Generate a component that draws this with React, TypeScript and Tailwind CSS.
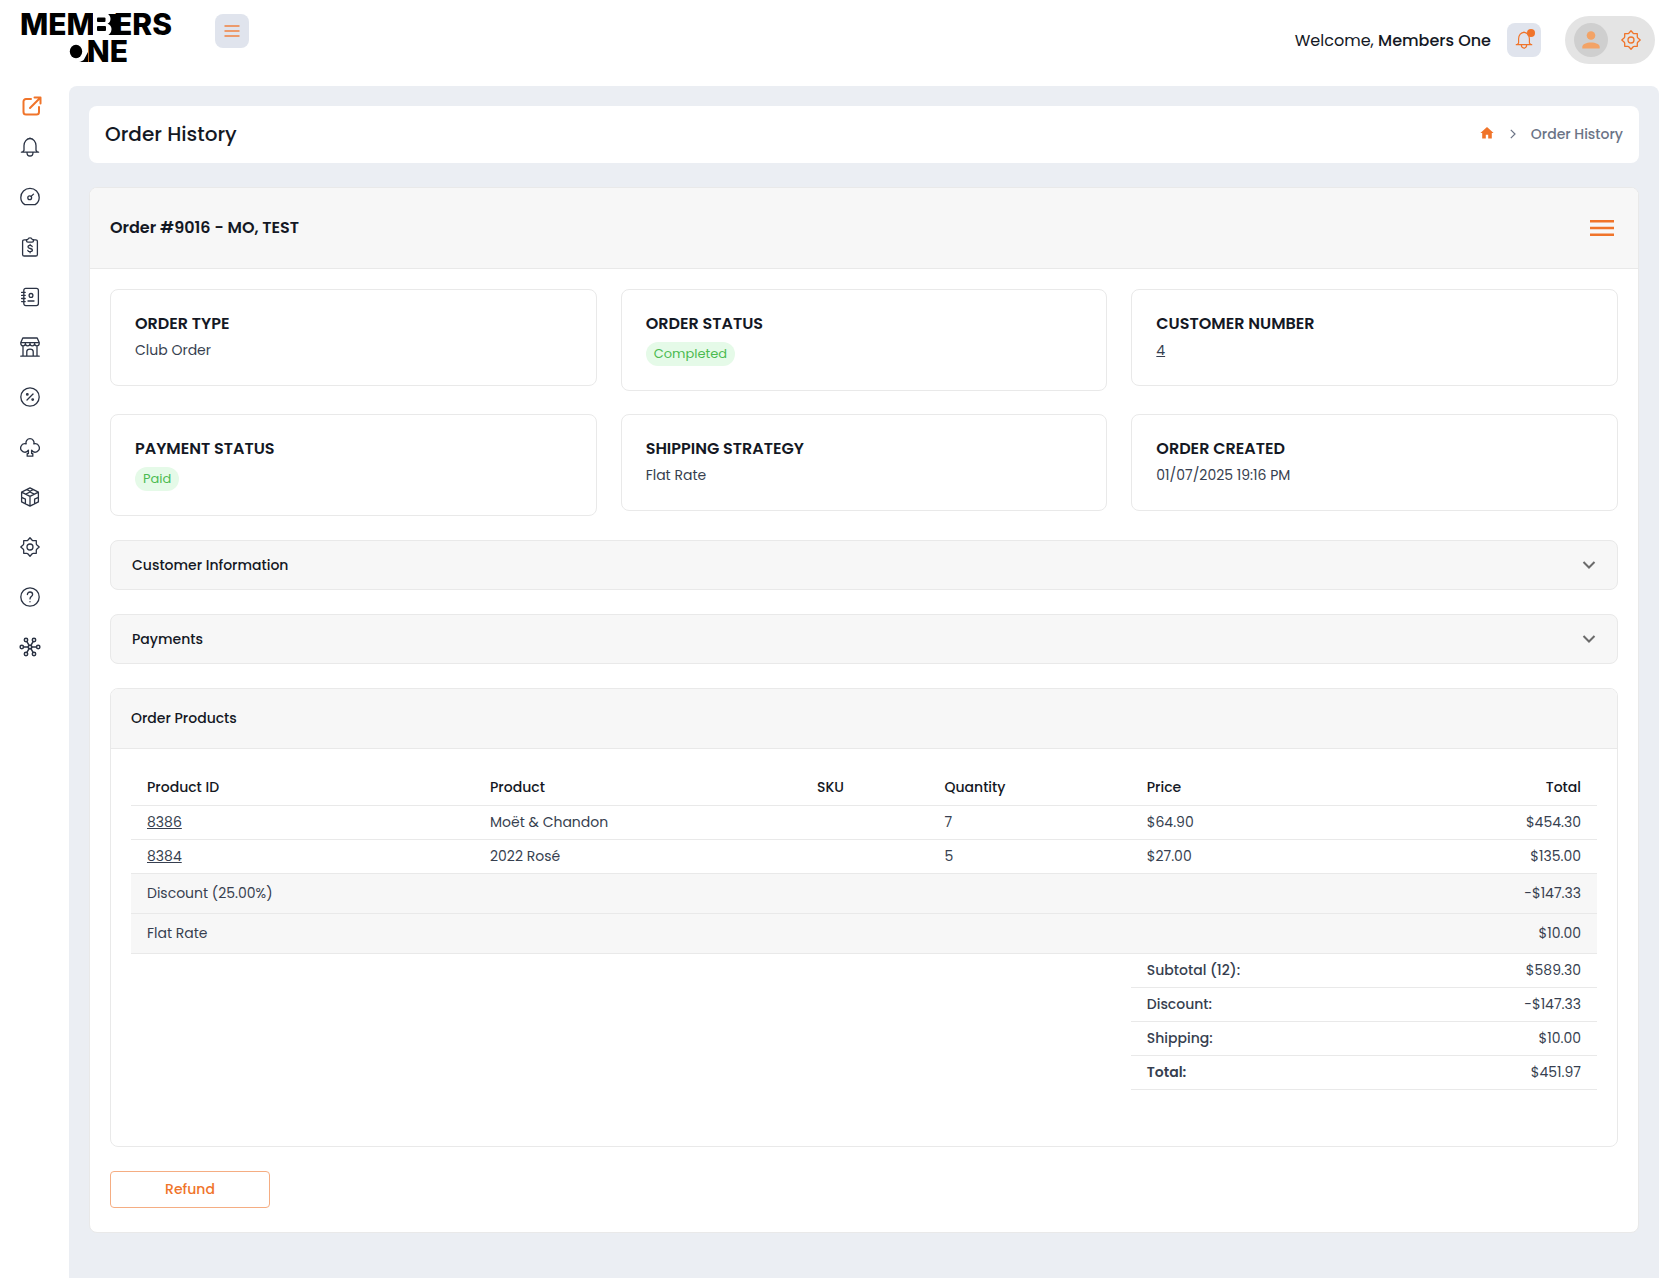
import React from "react";

const iconProps = {
  width: 20,
  height: 20,
  viewBox: "0 0 20 20",
  fill: "none",
  stroke: "currentColor",
  strokeWidth: 1.3,
  strokeLinecap: "round" as const,
  strokeLinejoin: "round" as const,
};

const BellIcon = () => (
  <svg {...iconProps}>
    <path d="M10 .8v.6M4 13.400V8.600C4 4.700 6.800 1.500 10 1.500s6 3.200 6 7.100v4.800l1.600 1.800H2.400zM1.400 15.200h17.200M7 15.400c0 2.200 1.200 3.600 3 3.600s3-1.400 3-3.600" />
  </svg>
);

const GearIcon = () => (
  <svg {...iconProps}>
    <path d="M10 .8l2.200 2.500c.3.300.6.400 1 .4h3.100v3.100c0 .4.100.7.400 1L19.200 10l-2.500 2.200c-.3.300-.4.600-.4 1v3.100h-3.100c-.4 0-.7.100-1 .4L10 19.200l-2.200-2.500c-.3-.3-.6-.4-1-.4H3.700v-3.100c0-.4-.1-.7-.4-1L.8 10l2.500-2.200c.3-.3.4-.6.4-1V3.700h3.100c.4 0 .7-.1 1-.4z" />
    <circle cx="10" cy="10" r="3" />
  </svg>
);

const GaugeIcon = () => (
  <svg {...iconProps}>
    <path d="M4.800 17.600C2.400 16 .8 13.600.8 10.400.8 5.400 4.900 1.300 10 1.300s9.200 4.100 9.200 9.100c0 3.200-1.600 5.600-4 7.200z" />
    <circle cx="9.700" cy="10.800" r="1.900" />
    <path d="M11.100 9.400l2.400-2.300" />
  </svg>
);

const OrdersIcon = () => (
  <svg {...iconProps}>
    <path d="M6.500 2.800H4.200c-.9 0-1.600.7-1.600 1.600v13c0 .9.7 1.600 1.600 1.600h11.600c.9 0 1.600-.7 1.600-1.600v-13c0-.9-.7-1.600-1.600-1.600h-2.300" />
    <path d="M6.500 2.600h1.200a2.400 2.400 0 0 1 4.600 0h1.200v1.200c0 .8-.6 1.400-1.400 1.400H7.900c-.8 0-1.400-.6-1.400-1.400z" />
    <path d="M12.200 9.600c-.2-.8-1-1.200-2.100-1.200-1.200 0-2.100.5-2.100 1.500 0 2.200 4.400 1 4.400 3.200 0 1-1 1.600-2.300 1.600-1.200 0-2.100-.5-2.300-1.400M10.100 7.400v1M10.100 14.700v1.100" />
  </svg>
);

const ContactsIcon = () => (
  <svg {...iconProps}>
    <rect x="3.800" y="1.400" width="14.600" height="17.200" rx="2" />
    <circle cx="11" cy="8.400" r="1.900" />
    <path d="M8 14h6M1.600 5.400h3.600M1.600 8.400h3.600M1.600 11.500h3.600M1.600 14.600h3.600" />
  </svg>
);

const StoreIcon = () => (
  <svg {...iconProps}>
    <path d="M2.800 1h14.400l2 4.600v1a2.300 2.300 0 0 1-4.600 0 2.300 2.300 0 0 1-4.600 0 2.300 2.300 0 0 1-4.600 0 2.300 2.300 0 0 1-4.600 0v-1zM1 5.600h18M3 9v10M17 9v10M.8 19.200h18.400M6.800 19v-4.600c0-1.400 1.400-2.300 3.200-2.300s3.200.9 3.200 2.300V19" />
  </svg>
);

const PercentIcon = () => (
  <svg {...iconProps}>
    <circle cx="10" cy="10" r="9.200" />
    <path d="M7 13l6-6" />
    <circle cx="7.300" cy="7.400" r=".8" />
    <circle cx="12.700" cy="12.600" r=".8" />
  </svg>
);

const ClubIcon = () => (
  <svg {...iconProps}>
    <path d="M8.400 13.200a4.200 4.200 0 1 1-2.200-6.300 4 4 0 1 1 7.600 0 4.200 4.200 0 1 1-2.200 6.300v3.400h1.200v2.600H7.200v-2.600h1.200z" />
  </svg>
);

const BoxIcon = () => (
  <svg {...iconProps}>
    <path d="M10 .9l8.400 4.200v9.800L10 19.200l-8.400-4.300V5.100zM1.600 5.100L10 9.400l8.400-4.300M10 9.400v9.800M7 2.600l3 1.700 3-1.700M1.600 10.400l3.800 1.800v4.600M14.600 16.800v-4.600l3.800-1.800M5.800 7.200L10 5l4.200 2.200" />
  </svg>
);

const HelpIcon = () => (
  <svg {...iconProps}>
    <circle cx="10" cy="10" r="9.200" />
    <path d="M7.400 7.600C7.400 6 8.500 5 10 5s2.600 1 2.600 2.400c0 2.200-2.600 2.200-2.600 4.500M10 14.600v.2" />
  </svg>
);

const HubIcon = () => (
  <svg {...iconProps} strokeWidth={1.5} className="overflow-visible">
    <circle cx="10" cy="10" r="1.800" />
    <circle cx="1.800" cy="10" r="1.700" />
    <circle cx="18.200" cy="10" r="1.700" />
    <circle cx="6" cy="3" r="1.700" />
    <circle cx="14" cy="3" r="1.700" />
    <circle cx="6" cy="17" r="1.700" />
    <circle cx="14" cy="17" r="1.700" />
    <path d="M3.600 10h4.400M12 10h4.400M6.900 4.600l2.200 3.800M13.100 4.600l-2.200 3.800M6.900 15.400l2.200-3.800M13.100 15.400l-2.200-3.800" />
  </svg>
);

// The B is knocked out of the E next to it, the O is a solid disc biting into the N
const Logo = () => (
  <svg width="180" height="76" viewBox="0 0 180 76" className="block">
    <g fontFamily="Inter, sans-serif" fontWeight="800" fontSize="30">
      <text x="20" y="35">MEM</text>
      <text x="172" y="35" textAnchor="end">BERS</text>
      <text x="128" y="62" textAnchor="end">ONE</text>
    </g>
    <rect x="93" y="12" width="19" height="24" fill="#fff" />
    <rect x="104" y="14" width="15" height="21" />
    <path d="M93 13h11.500c4 0 6 3 6 6 0 2.300-1.200 4-3 4.800 2.500.7 4 2.800 4 5.300 0 3.700-2.500 6.900-6.500 6.900H93z" fill="#fff" />
    <rect x="97" y="17.500" width="8.500" height="4.500" rx="1" />
    <rect x="97" y="26" width="9" height="5" rx="1" />
    <rect x="62" y="38" width="24" height="26" fill="#fff" />
    <path d="M88 52v10h-9c2-.3 4-1.200 5-2.500z" />
    <circle cx="76" cy="51" r="9.500" fill="#fff" />
    <ellipse cx="76" cy="51.500" rx="6.200" ry="6.800" />
  </svg>
);

const navItems = [
  { label: "Notifications", icon: BellIcon },
  { label: "Dashboard", icon: GaugeIcon },
  { label: "Orders", icon: OrdersIcon },
  { label: "Customers", icon: ContactsIcon },
  { label: "Store", icon: StoreIcon },
  { label: "Promotions", icon: PercentIcon },
  { label: "Clubs", icon: ClubIcon },
  { label: "Inventory", icon: BoxIcon },
  { label: "Settings", icon: GearIcon },
  { label: "Help", icon: HelpIcon },
  { label: "Integrations", icon: HubIcon },
];

const products = [
  { id: "8386", name: "Moët & Chandon", sku: "", quantity: 7, price: "$64.90", total: "$454.30" },
  { id: "8384", name: "2022 Rosé", sku: "", quantity: 5, price: "$27.00", total: "$135.00" },
];

const adjustments = [
  { label: "Discount (25.00%)", amount: "-$147.33" },
  { label: "Flat Rate", amount: "$10.00" },
];

const summary = [
  { label: "Subtotal (12):", amount: "$589.30" },
  { label: "Discount:", amount: "-$147.33" },
  { label: "Shipping:", amount: "$10.00" },
  { label: "Total:", amount: "$451.97", strong: true },
];

function Badge({ children }: { children: React.ReactNode }) {
  return (
    <span className="mt-0.5 flex h-6 w-fit items-center rounded-full bg-[#e5fae8] px-2 pb-0.5 text-[13px] text-[#4cbb51]">
      {children}
    </span>
  );
}

function InfoCard({ title, children }: { title: string; children: React.ReactNode }) {
  return (
    <div className="flex flex-col gap-[7px] rounded-lg border border-[#e9e9e9] p-6">
      <h3 className="text-base leading-[19px] font-semibold text-[#141824]">{title}</h3>
      <div className="flex leading-[21px]">{children}</div>
    </div>
  );
}

function AccordionRow({ title }: { title: string }) {
  return (
    <button type="button" className="flex h-[50px] w-full items-center justify-between rounded-lg border border-[#e9e9e9] bg-[#f7f7f7] px-[21px] font-medium text-[#141824]">
      {title}
      <svg width="14" height="14" viewBox="0 0 14 14" fill="none" stroke="#6b6b6b" strokeWidth="2">
        <path d="M1.500 4L7 9.500 12.500 4" />
      </svg>
    </button>
  );
}

function App() {
  return (
    <div className="flex min-h-screen flex-col bg-white font-['Poppins','Inter',sans-serif] text-sm text-[#373f50]">
      <header className="flex h-[86px] items-start justify-between pr-[22px]">
        <div className="flex gap-[35px]">
          <a href="#" aria-label="Members One">
            <Logo />
          </a>
          <button type="button" aria-label="Toggle menu" className="mt-3.5 flex size-[34px] items-center justify-center rounded-lg bg-[#e0e4ed] text-[#ec9a6b]">
            <svg width="16" height="14" viewBox="0 0 16 14" fill="none" stroke="currentColor" strokeWidth="1.800">
              <path d="M.5 2h15M.5 7h15M.5 12h15" />
            </svg>
          </button>
        </div>
        <div className="flex items-center pt-4">
          <p className="pt-0.5 text-base text-[#141824]">
            Welcome, <span className="font-medium">Members One</span>
          </p>
          <button type="button" aria-label="Notifications" className="relative ml-4 flex size-[34px] items-center justify-center rounded-lg bg-[#e0e4ed] text-[#f0742a]">
            <svg {...iconProps} width="18" height="18">
              <path d="M10 .8v.6M4 13.400V8.600C4 4.700 6.800 1.500 10 1.500s6 3.200 6 7.100v4.800l1.600 1.800H2.400zM1.400 15.200h17.200M7 15.400c0 2.200 1.200 3.600 3 3.600s3-1.400 3-3.600" />
            </svg>
            <span className="absolute top-1.5 right-1.5 size-2 rounded-full bg-[#f0742a]"></span>
          </button>
          <button type="button" aria-label="Account" className="ml-6 flex h-12 w-[90px] items-center justify-between rounded-full bg-[#e4e4e4] pr-3.5 pl-[9px] text-[#f0742a]">
            <span className="flex size-[34px] items-center justify-center rounded-full bg-[#cfcfcf]">
              <svg width="18" height="18" viewBox="0 0 18 18" fill="#f3a366">
                <circle cx="9" cy="4.500" r="4.300" />
                <path d="M.3 17.500v-1.700C.3 13 4.500 11.400 9 11.400s8.700 1.600 8.700 4.400v1.700z" />
              </svg>
            </span>
            <GearIcon />
          </button>
        </div>
      </header>

      <div className="flex flex-1 pr-[18px]">
        <aside className="w-[69px] shrink-0">
          <nav className="flex flex-col gap-[30px] pt-[50px] pl-5 text-[#2b3344]">
            <a href="#" aria-label="Open store" className="-mt-10 -mb-[9px] w-fit pl-0.5 text-[#f0742a]">
              <svg {...iconProps} strokeWidth={2}>
                <path d="M9 3H4a2.500 2.500 0 0 0-2.500 2.500V16A2.500 2.500 0 0 0 4 18.500h10.500A2.500 2.500 0 0 0 17 16v-5M12.500 1.500h6v6M18.500 1.500L8 12" />
              </svg>
            </a>
            {navItems.map(({ label, icon: Icon }) => (
              <a key={label} href="#" aria-label={label} className="w-fit">
                <Icon />
              </a>
            ))}
          </nav>
        </aside>

        <main className="min-w-0 flex-1 rounded-t-lg bg-[#ebeef3] p-5 pb-[46px]">
          <div className="mb-6 flex h-[57px] items-center justify-between rounded-lg bg-white px-4 pb-0.5">
            <h1 className="text-xl font-medium text-[#141824]">Order History</h1>
            <nav className="flex items-center font-medium text-[#6b7486]">
              <a href="#" aria-label="Home" className="text-[#f0742a]">
                <svg width="14" height="14" viewBox="0 0 14 14" fill="currentColor">
                  <path d="M7 0L.4 6h1.800v5.600h3.600V7.800h2.400v3.800h3.600V6h1.800z" />
                </svg>
              </a>
              <svg width="6" height="10" viewBox="0 0 6 10" fill="none" stroke="currentColor" strokeWidth="1.200" className="mr-[15px] ml-4">
                <path d="M.8.8L5 5 .8 9.200" />
              </svg>
              <span>Order History</span>
            </nav>
          </div>

          <section className="overflow-hidden rounded-lg border border-[#e9e9e9] bg-white">
            <div className="flex h-[81px] items-center justify-between border-b border-[#e9e9e9] bg-[#f7f7f7] pr-6 pl-5">
              <h2 className="text-base font-semibold text-[#141824]">Order #9016 - MO, TEST</h2>
              <button type="button" aria-label="Order actions" className="text-[#f0742a]">
                <svg width="24" height="16" viewBox="0 0 24 16" fill="currentColor">
                  <path d="M0 0h24v2.600H0zM0 6.700h24v2.600H0zM0 13.400h24V16H0z" />
                </svg>
              </button>
            </div>

            <div className="flex flex-col gap-6 px-5 pt-5 pb-6">
              <div className="grid grid-cols-3 items-start gap-x-6 gap-y-[23px]">
                <InfoCard title="ORDER TYPE">Club Order</InfoCard>
                <InfoCard title="ORDER STATUS">
                  <Badge>Completed</Badge>
                </InfoCard>
                <InfoCard title="CUSTOMER NUMBER">
                  <a href="#" className="underline">4</a>
                </InfoCard>
                <InfoCard title="PAYMENT STATUS">
                  <Badge>Paid</Badge>
                </InfoCard>
                <InfoCard title="SHIPPING STRATEGY">Flat Rate</InfoCard>
                <InfoCard title="ORDER CREATED">01/07/2025 19:16 PM</InfoCard>
              </div>

              <AccordionRow title="Customer Information" />
              <AccordionRow title="Payments" />

              <div className="overflow-hidden rounded-lg border border-[#e9e9e9]">
                <h2 className="flex h-[60px] items-center border-b border-[#e9e9e9] bg-[#f7f7f7] px-5 pb-0.5 font-medium text-[#141824]">
                  Order Products
                </h2>
                <div className="px-5 pt-5 pb-14">
                  <table className="w-full table-fixed text-left">
                    <colgroup>
                      <col className="w-[23.4%]" />
                      <col className="w-[22.3%]" />
                      <col className="w-[8.7%]" />
                      <col className="w-[13.8%]" />
                      <col />
                      <col />
                    </colgroup>
                    <thead>
                      <tr className="h-9 border-b border-[#e9e9e9] text-[#141824] [&>th]:px-4 [&>th]:font-medium">
                        <th>Product ID</th>
                        <th>Product</th>
                        <th>SKU</th>
                        <th>Quantity</th>
                        <th>Price</th>
                        <th className="text-right">Total</th>
                      </tr>
                    </thead>
                    <tbody>
                      {products.map((p) => (
                        <tr key={p.id} className="h-[34px] border-b border-[#e9e9e9] [&>td]:px-4">
                          <td>
                            <a href="#" className="underline">{p.id}</a>
                          </td>
                          <td>{p.name}</td>
                          <td>{p.sku}</td>
                          <td>{p.quantity}</td>
                          <td>{p.price}</td>
                          <td className="text-right">{p.total}</td>
                        </tr>
                      ))}
                      {adjustments.map((a) => (
                        <tr key={a.label} className="h-10 border-b border-[#e9e9e9] bg-[#f7f7f7]">
                          <td colSpan={5} className="px-4">{a.label}</td>
                          <td className="px-4 text-right">{a.amount}</td>
                        </tr>
                      ))}
                    </tbody>
                    <tfoot>
                      {summary.map((s) => (
                        <tr key={s.label} className="h-[34px]">
                          <td colSpan={4}></td>
                          <th className={`border-b border-[#e9e9e9] px-4 ${s.strong ? "font-semibold" : "font-medium"}`}>{s.label}</th>
                          <td className="border-b border-[#e9e9e9] px-4 text-right">{s.amount}</td>
                        </tr>
                      ))}
                    </tfoot>
                  </table>
                </div>
              </div>

              <button type="button" className="h-[37px] w-40 rounded-sm border border-[#f5ad82] font-medium text-[#f0742a]">
                Refund
              </button>
            </div>
          </section>
        </main>
      </div>
    </div>
  );
}

export default App;
